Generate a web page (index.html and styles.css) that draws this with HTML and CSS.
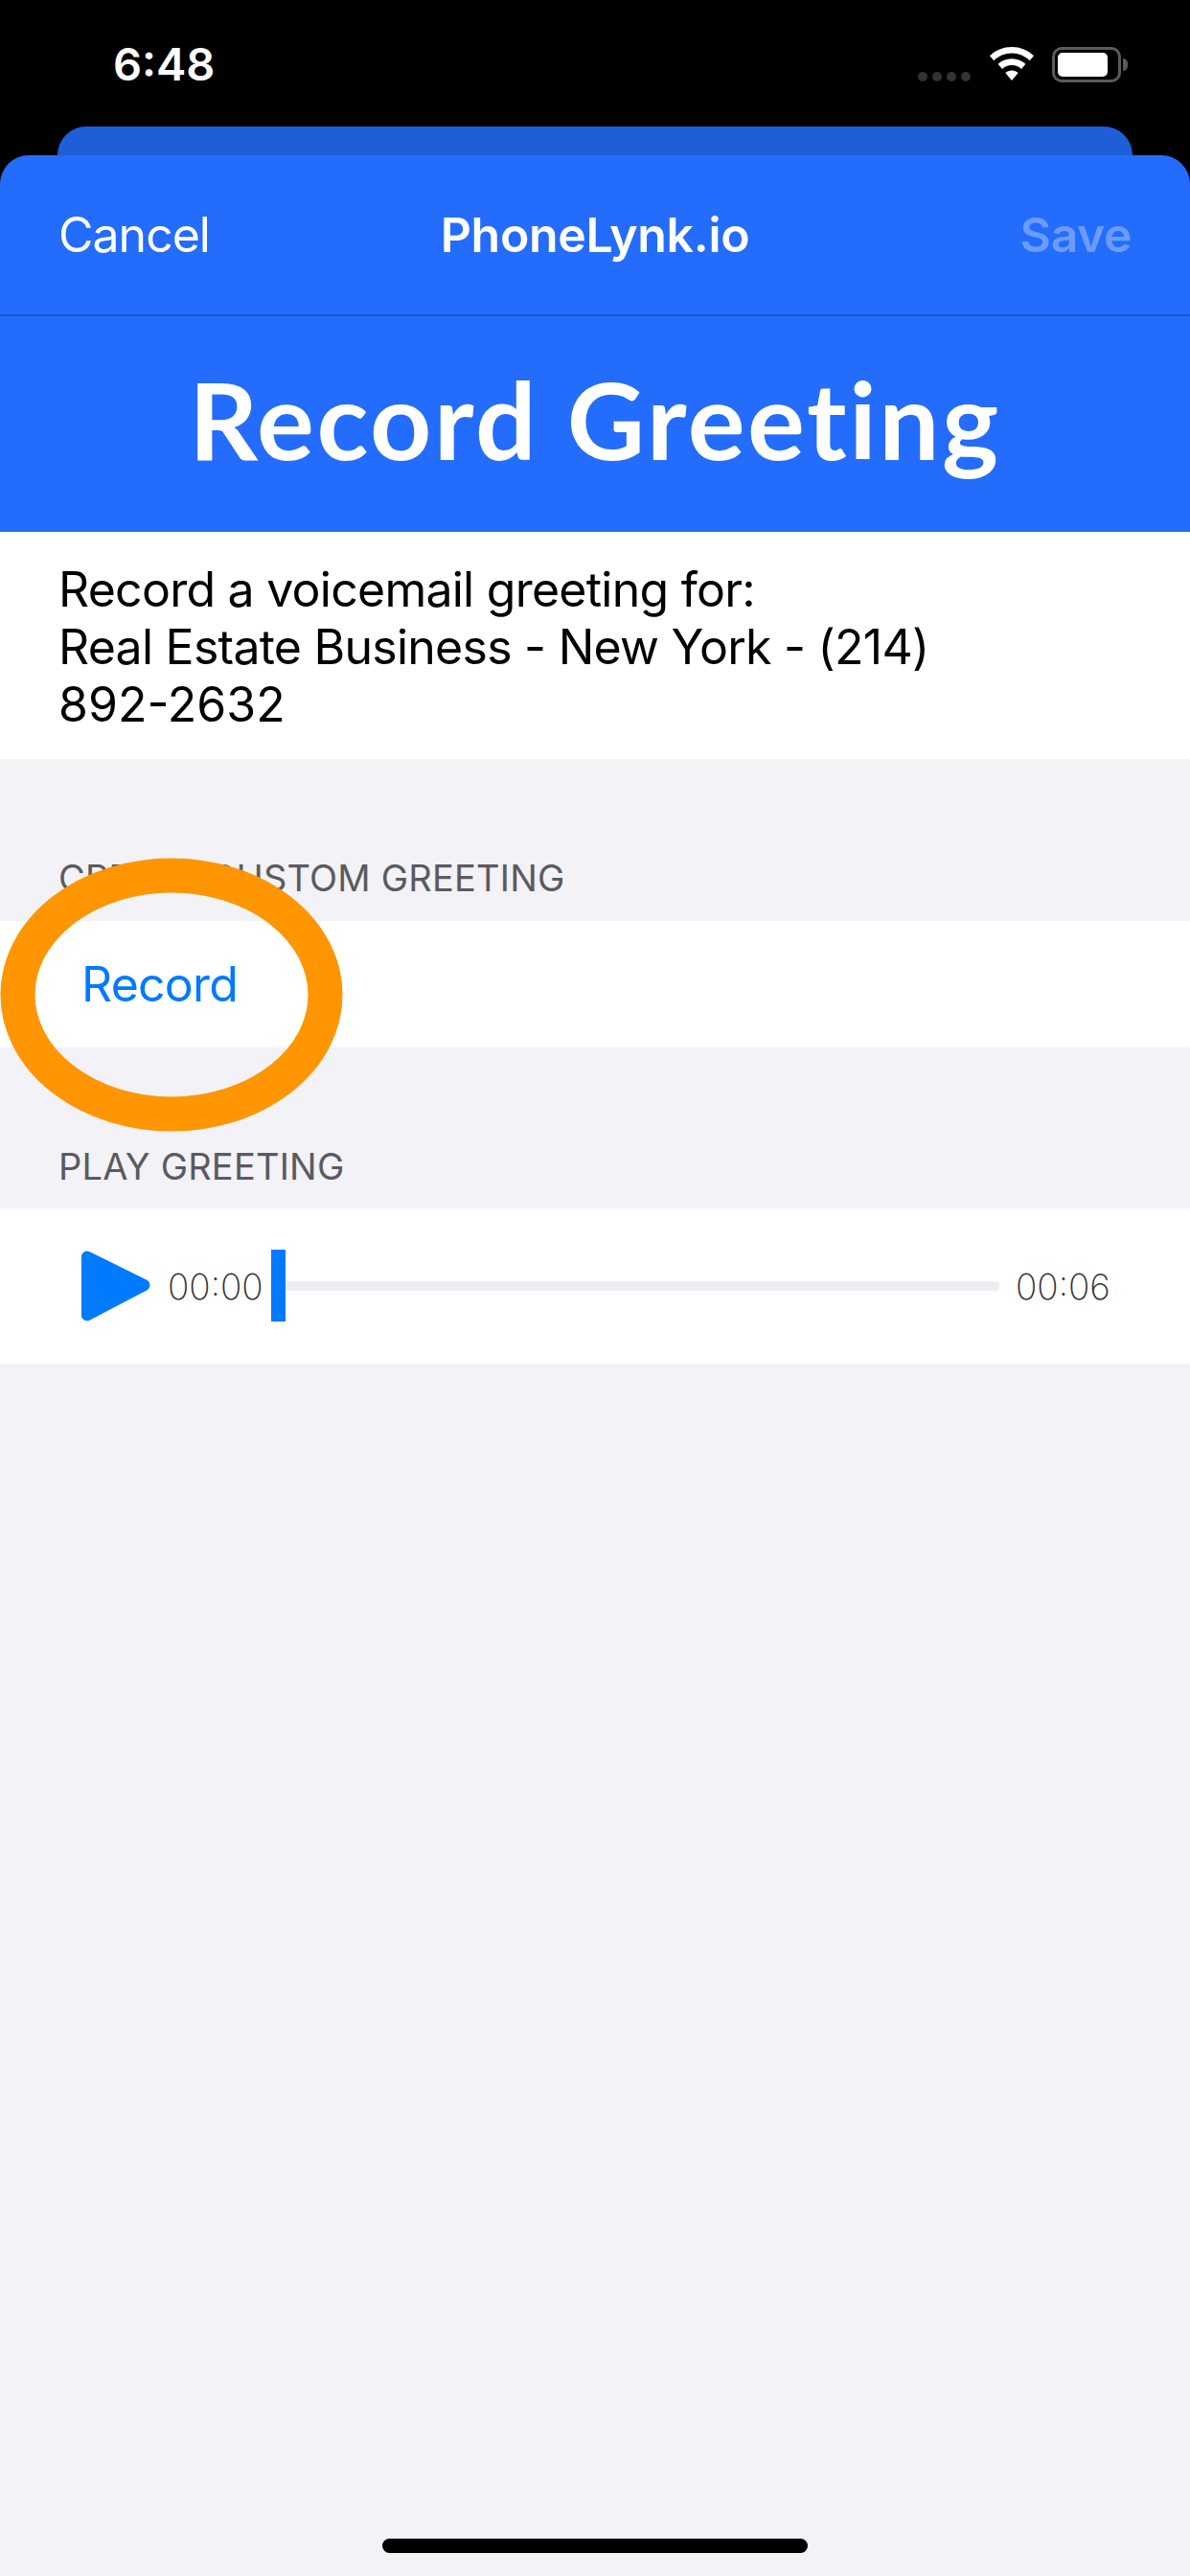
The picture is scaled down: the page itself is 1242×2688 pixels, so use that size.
FILE: index.html
```html
<!DOCTYPE html>
<html lang="en">
<head>
<meta charset="utf-8">
<title>Record Greeting</title>
<link rel="stylesheet" href="styles.css">
</head>
<body>
<div class="screen">
  <div class="top">
    <header class="status">
      <span class="clock">6:48</span>
      <div class="status-icons">
        <div class="signal"><i></i><i></i><i></i><i></i></div>
        <svg class="wifi" width="48" height="36" viewBox="0 0 48 36">
          <path fill="#fff" d="M24 0C15 0 7 3.400 1 9.300l4.300 5C10.200 9.500 16.800 6.600 24 6.600s13.800 2.900 18.700 7.700l4.300-5C41 3.400 33 0 24 0z"/>
          <path fill="#fff" d="M24 12.200c-5.600 0-10.600 2.100-14.400 5.600l4.400 5.100c2.600-2.400 6.100-3.900 10-3.900s7.400 1.500 10 3.900l4.400-5.100c-3.800-3.500-8.800-5.600-14.400-5.600z"/>
          <path fill="#fff" d="M24 24.600c-2.600 0-5 1-6.700 2.500L24 35l6.700-7.900c-1.700-1.500-4.100-2.500-6.700-2.500z"/>
        </svg>
        <div class="battery"><div class="battery-body"><div class="battery-fill"></div></div><div class="battery-cap"></div></div>
      </div>
    </header>

    <div class="card-behind"></div>

    <div class="sheet-head">
      <nav class="nav">
        <span class="nav-btn">Cancel</span>
        <span class="nav-title">PhoneLynk.io</span>
        <span class="nav-btn nav-save">Save</span>
      </nav>
      <h1 class="title">Record Greeting</h1>
    </div>
  </div>

  <section class="intro">Record a voicemail greeting for:<br>Real Estate Business - New York - (214)<br><span class="num">892-2632</span></section>

  <h2 class="section-label label-create">CREATE CUSTOM GREETING</h2>
  <div class="record-row"><span class="record-link">Record</span></div>

  <h2 class="section-label label-play">PLAY GREETING</h2>
  <div class="player">
    <svg class="play" width="72" height="74" viewBox="0 0 72 74">
      <path fill="#007aff" d="M0 6.500C0 1.800 4.500-.8 8.800 1.200L68 30.600c4.600 2.300 4.600 8.700 0 10.900L8.800 72.500C4.500 74.500 0 71.900 0 67.300z"/>
    </svg>
    <span class="time time-start">00:00</span>
    <div class="track"><div class="thumb"></div></div>
    <span class="time time-end">00:06</span>
  </div>

  <svg class="highlight" width="360" height="286" viewBox="0 0 360 286">
    <ellipse cx="179" cy="143" rx="160.500" ry="124.500" fill="none" stroke="#ff9500" stroke-width="36"/>
  </svg>

  <div class="home-bar"></div>
</div>
</body>
</html>
```
FILE: styles.css
```css
* { box-sizing: border-box; }
html, body { margin: 0; padding: 0; }
body { background: #f2f2f7; font-family: Inter, "Liberation Sans", sans-serif; }
.screen { position: relative; width: 1242px; height: 2688px; overflow: hidden; background: #f2f2f7; }

.top { background: #000; }
.status { height: 132px; display: flex; justify-content: space-between; padding: 47px 65px 0 118px; color: #fff; }
.clock { font-size: 47px; line-height: 40px; font-weight: 600; }
.status-icons { display: flex; align-items: flex-start; }
.signal { display: flex; gap: 5px; margin-top: 28px; margin-right: 19px; }
.signal i { width: 10px; height: 10px; border-radius: 50%; background: #333; }
.wifi { margin-top: 2px; margin-right: 18px; }
.battery { display: flex; align-items: center; margin-top: 2px; }
.battery-body { width: 72px; height: 37px; border: 3px solid #5a5a5a; border-radius: 10px; padding: 3px; }
.battery-fill { width: 52px; height: 25px; background: #fff; border-radius: 5px; }
.battery-cap { width: 5px; height: 13px; background: #5a5a5a; border-radius: 0 6px 6px 0; margin-left: 2px; }

.card-behind { height: 30px; margin: 0 60px; background: #1e5fd8; border-radius: 30px 30px 0 0; }

.sheet-head { background: #246cfb; border-radius: 30px 30px 0 0; height: 393px; color: #fff; }
.nav { height: 168px; display: flex; align-items: center; justify-content: space-between; padding: 0 61px; border-bottom: 2px solid #1d58cc; position: relative; }
.nav-btn { font-size: 50px; letter-spacing: -1px; }
.nav-save { font-weight: 600; color: #6b9bfc; letter-spacing: -0.5px; }
.nav-title { position: absolute; left: 0; right: 0; text-align: center; font-size: 50px; font-weight: 600; letter-spacing: -0.3px; }
.title { margin: 0; text-align: center; font-family: Lato, sans-serif; font-size: 112px; font-weight: 700; line-height: 214px; letter-spacing: 2.6px; font-variant-ligatures: none; }

.intro { background: #fff; height: 237px; padding: 30px 61px 0; font-size: 50px; letter-spacing: -0.75px; line-height: 60px; color: #000; }
.num { letter-spacing: 0; }

.section-label { margin: 0; font-size: 38px; font-weight: 400; color: #5a5a5f; letter-spacing: 0.2px; padding-left: 61px; }
.label-create { height: 169px; padding-top: 100px; line-height: 48px; }
.record-row { background: #fff; height: 132px; display: flex; align-items: center; padding-left: 85px; }
.record-link { font-size: 50px; letter-spacing: -0.8px; color: #007aff; }
.label-play { height: 168px; padding-top: 100px; line-height: 48px; }

.player { background: #fff; height: 162px; display: flex; align-items: center; padding-left: 85px; }
.play { flex: none; }
.time { font-size: 37px; font-weight: 200; color: #333; flex: none; }
.time-start { margin-left: 18px; width: 97px; }
.time-end { margin-left: 17px; }
.track { position: relative; width: 760px; height: 10px; margin-left: 11px; background: #edeef2; border-radius: 0 4px 4px 0; }
.thumb { position: absolute; left: 0; top: -33px; width: 15px; height: 75px; background: #007aff; }

.highlight { position: absolute; left: 0; top: 895px; }
.home-bar { position: absolute; left: 399px; top: 2649px; width: 444px; height: 15px; border-radius: 8px; background: #000; }
```
